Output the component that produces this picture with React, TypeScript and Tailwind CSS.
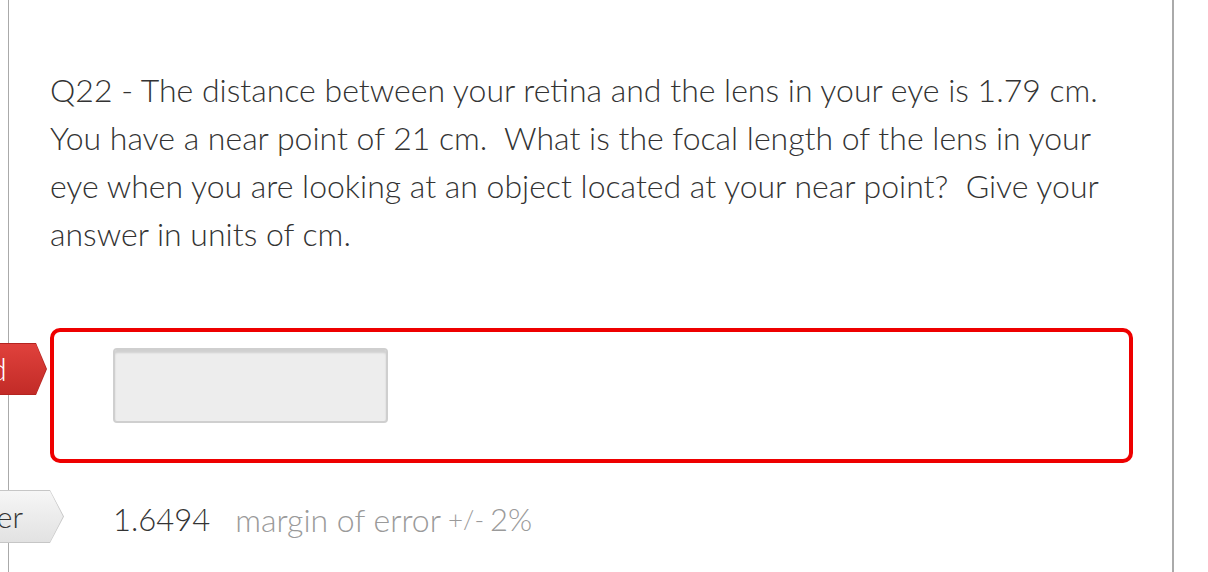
export default function App() {
  return (
    <div className="relative h-[572px] w-full overflow-hidden bg-white font-['Lato','Open_Sans',sans-serif] text-[#333]">
      <div className="ml-[8px] h-[572px] w-[1166px] border-l border-r-2 border-[#aaa]">
        <div className="pl-[41px] pr-[60px] pt-[66px]">
          <p className="font-['Lato_Light','Lato',sans-serif] text-[32px] font-light leading-[48px] text-[#333]">
            Q22 - The distance between your retina and the lens in your eye is 1.79 cm.
            You have a near point of 21 cm.&nbsp; What is the focal length of the lens in your
            eye when you are looking at an object located at your near point?&nbsp; Give your
            answer in units of cm.
          </p>
        </div>

        <div className="relative mt-[70px]">
          <div className="absolute left-[-209px] top-[15px] h-[52px] w-[247px] bg-[#b42420] [clip-path:polygon(0_0,236px_0,247px_26px,236px_52px,0_52px)]">
            <div className="absolute inset-px flex items-center justify-end bg-gradient-to-b from-[#e0413c] to-[#c22b27] pr-[39px] font-['Lato_Light','Lato',sans-serif] text-[32px] font-light text-white [clip-path:polygon(0_0,235px_0,245px_25px,235px_50px,0_50px)]">
              Unanswered
            </div>
          </div>
          <div className="ml-[41px] h-[135px] w-[1083px] rounded-[10px] border-4 border-[#ee0000] pl-[59px] pt-[16px]">
            <input
              type="text"
              className="h-[75px] w-[275px] rounded-[4px] border-2 border-[#cfcfcf] bg-[#ededed] shadow-[inset_0_3px_2px_rgba(0,0,0,0.12)] outline-none"
            />
          </div>
        </div>

        <div className="relative mt-[27px] flex h-[53px] items-center pl-[104px] pt-[6px]">
          <div className="absolute left-[-209px] top-0 h-[53px] w-[264px] bg-[#c6c6c6] [clip-path:polygon(0_0,250px_0,264px_26.5px,250px_53px,0_53px)]">
            <div className="absolute inset-px flex items-center justify-end bg-gradient-to-b from-[#f6f6f6] to-[#e2e2e2] pr-[40px] font-['Lato_Light','Lato',sans-serif] text-[30px] font-light text-[#333] [clip-path:polygon(0_0,249px_0,262px_25.5px,249px_51px,0_51px)]">
              Correct Answer
            </div>
          </div>
          <span className="font-['Lato_Light','Lato',sans-serif] text-[31px] font-light text-[#333]">1.6494</span>
          <span className="ml-[25px] font-['Lato_Light','Lato',sans-serif] text-[32px] font-light text-[#9a9a9a]">margin of error</span>
          <span className="ml-[7px] font-['Lato_Light','Lato',sans-serif] text-[26px] font-light text-[#9a9a9a]">+/-</span>
          <span className="ml-[6px] font-['Lato_Light','Lato',sans-serif] text-[31px] font-light text-[#9a9a9a]">2%</span>
        </div>
      </div>
    </div>
  );
}
